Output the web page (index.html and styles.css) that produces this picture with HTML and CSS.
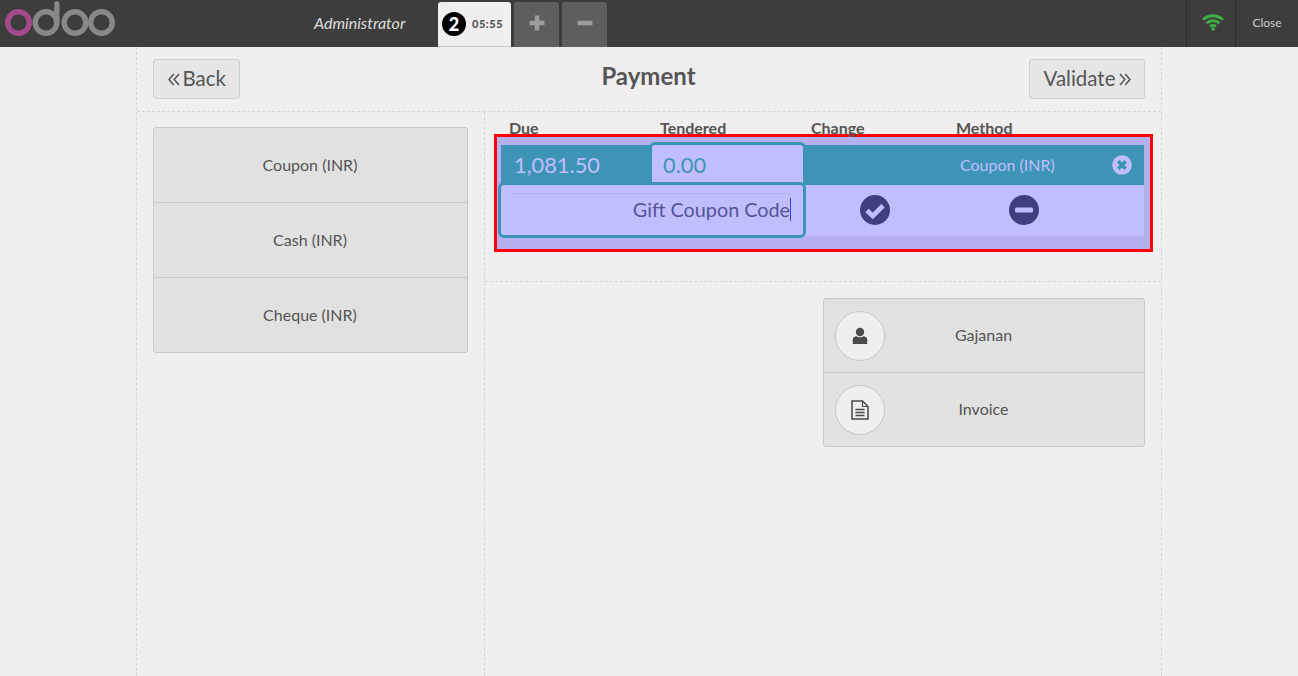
FILE: index.html
```html
<!DOCTYPE html>
<html lang="en">
<head>
<meta charset="utf-8">
<title>Payment</title>
<link rel="stylesheet" href="styles.css">
</head>
<body>
<header class="topbar">
  <svg class="logo" width="116" height="47" viewBox="0 0 116 47">
    <circle cx="18.500" cy="22.500" r="10.800" fill="none" stroke="#a34a8b" stroke-width="5.400"/>
    <g fill="none" stroke="#888" stroke-width="5.400">
      <circle cx="46" cy="22.500" r="10.800"/>
      <path d="M56.800 4V22.500" stroke-linecap="round"/>
      <circle cx="75" cy="22.500" r="10.800"/>
      <circle cx="101.500" cy="22.500" r="10.800"/>
    </g>
  </svg>
  <div class="cashier">Administrator</div>
  <div class="orders">
    <div class="tab"><span class="badge">2</span><span class="time">05:55</span></div>
    <button class="tab-btn"><svg width="16" height="16" viewBox="0 0 16 16"><path d="M0.500 8H15.500M8 0.500V15.500" stroke="#9c9c9c" stroke-width="4.500"/></svg></button>
    <button class="tab-btn"><svg width="16" height="16" viewBox="0 0 16 16"><path d="M0.500 8H15.500" stroke="#9c9c9c" stroke-width="4.500"/></svg></button>
  </div>
  <div class="status wifi">
    <svg width="22" height="17" viewBox="0 0 22 17" fill="none" stroke="#3fae49" stroke-width="2.800">
      <path d="M1 5.800C6.800 0.400 15.200 0.400 21 5.800"/>
      <path d="M4.500 9.300C8.300 5.900 13.700 5.900 17.500 9.300"/>
      <path d="M8 12.500C9.800 11.200 12.200 11.200 14 12.500"/>
      <circle cx="11" cy="15" r="1.800" fill="#3fae49" stroke="none"/>
    </svg>
  </div>
  <div class="status close">Close</div>
</header>
<main class="screen">
  <div class="paybar">
    <div class="bar-start">
      <button class="nav-btn">
        <svg class="chev" width="12" height="13" viewBox="0 0 12 13" fill="none" stroke="#555" stroke-width="1.500"><path d="M5.800 1L1 6.500L5.800 12M11 1L6.200 6.500L11 12"/></svg>
        <span>Back</span>
      </button>
    </div>
    <h1 class="title">Payment</h1>
    <div class="bar-end">
      <button class="nav-btn">
        <span>Validate</span>
        <svg class="chev" width="12" height="13" viewBox="0 0 12 13" fill="none" stroke="#555" stroke-width="1.500"><path d="M1 1L5.800 6.500L1 12M6.200 1L11 6.500L6.200 12"/></svg>
      </button>
    </div>
  </div>
  <div class="columns">
    <section class="left">
      <div class="methods">
        <div class="method">Coupon (INR)</div>
        <div class="method">Cash (INR)</div>
        <div class="method">Cheque (INR)</div>
      </div>
    </section>
    <section class="right">
      <div class="lines">
        <div class="heads">
          <span class="h-due">Due</span>
          <span class="h-tendered">Tendered</span>
          <span class="h-change">Change</span>
          <span class="h-method">Method</span>
        </div>
        <div class="highlight">
          <div class="row-selected">
            <span class="due">1,081.50</span>
            <span class="tendered">0.00</span>
            <span class="line-method">Coupon (INR)</span>
            <svg class="remove" width="20" height="20" viewBox="0 0 20 20">
              <circle cx="10" cy="10" r="9.800" fill="#c0beff"/>
              <path d="M6.300 6.300L13.700 13.700M13.700 6.300L6.300 13.700" stroke="#3e94b6" stroke-width="3.600"/>
            </svg>
          </div>
          <div class="row-extra">
            <div class="coupon-box"><div class="coupon-input"><span class="coupon-text">Gift Coupon Code</span></div></div>
            <svg class="act-check" width="30" height="30" viewBox="0 0 30 30">
              <circle cx="15" cy="15" r="15" fill="#403e80"/>
              <path d="M7 15.500L12.800 21L23 10.800" fill="none" stroke="#c0beff" stroke-width="4.800"/>
            </svg>
            <svg class="act-minus" width="30" height="30" viewBox="0 0 30 30">
              <circle cx="15" cy="15" r="15" fill="#403e80"/>
              <rect x="6" y="12.500" width="18" height="5" rx="1.500" fill="#c0beff"/>
            </svg>
          </div>
        </div>
      </div>
      <div class="extras">
        <div class="client-box">
          <div class="extra-row">
            <span class="round">
              <svg width="16" height="18" viewBox="0 0 16 18"><circle cx="8" cy="5" r="4.200" fill="#4c4a4a"/><path d="M0.800 17V12.500C0.800 10.500 2.500 9.500 4.500 9.200C6 10.600 10 10.600 11.500 9.200C13.500 9.500 15.200 10.500 15.200 12.500V17Z" fill="#4c4a4a"/></svg>
            </span>
            <span class="extra-label">Gajanan</span>
          </div>
          <div class="extra-row">
            <span class="round">
              <svg width="18" height="20" viewBox="0 0 18 20" fill="none" stroke="#4c4a4a"><path d="M1 1H11.500L17 6.500V19H1Z" stroke-width="1.500"/><path d="M11.500 1V6.500H17" stroke-width="1.200"/><path d="M4.500 9.500H13.500M4.500 12.500H13.500M4.500 15.500H13.500" stroke-width="1.300"/></svg>
            </span>
            <span class="extra-label">Invoice</span>
          </div>
        </div>
      </div>
    </section>
  </div>
</main>
</body>
</html>
```
FILE: styles.css
```css
* { box-sizing: border-box; }
html, body { margin: 0; height: 676px; overflow: hidden; }
body { background: #f0eeef; color: #555; font-family: Lato, "Open Sans", sans-serif; }
button { font-family: inherit; }

.topbar { height: 47px; background: #3d3d3d; display: flex; align-items: stretch; }
.logo { flex: none; }
.cashier { width: 289px; padding-left: 198px; line-height: 45px; font-size: 16px; font-style: italic; color: #ddd; white-space: nowrap; }
.orders { display: flex; gap: 3px; padding-top: 2px; margin-left: 33px; flex: 1; }
.tab { width: 73px; background: #f0eeef; border-bottom: 1px solid #ccc; border-radius: 3px 3px 0 0; display: flex; align-items: center; padding-left: 4px; gap: 6px; }
.badge { width: 24px; height: 24px; border-radius: 50%; background: #000; color: #fff; font-weight: 900; font-size: 18px; line-height: 24px; text-align: center; }
.time { font-size: 11px; font-weight: 900; color: #555; letter-spacing: .55px; margin-top: -1px; }
.tab-btn { width: 45px; border: 0; padding: 0 0 3px; background: #5e5e5e; border-radius: 3px 3px 0 0; display: flex; align-items: center; justify-content: center; }
.status { border-left: 1px solid #2d2d2d; display: flex; align-items: center; justify-content: center; }
.wifi { width: 49px; padding: 0 0 3px 4px; }
.close { width: 63px; font-size: 12px; color: #ccc; padding-bottom: 2px; }

.screen { width: 1026px; height: 629px; margin-left: 136px; border-left: 1px dashed #d6d6d6; border-right: 1px dashed #d6d6d6; }
.paybar { height: 65px; padding: 12px 16px 0; border-bottom: 1px dashed #d6d6d6; display: grid; grid-template-columns: 1fr auto 1fr; align-items: start; }
.bar-end { display: flex; justify-content: flex-end; }
.bar-start { display: flex; }
.nav-btn { height: 40px; padding: 0 13.500px; background: #e6e6e6; border: 1px solid #cfcfcf; border-radius: 3px; color: #555; font-size: 20.500px; display: flex; align-items: center; gap: 3px; }
.nav-btn span { margin-top: -3px; }
.chev { flex: none; }
.title { margin: 0 1px 0 0; text-align: center; font-size: 24px; font-weight: 700; line-height: 34px; color: #555; }

.columns { display: flex; height: 564px; }
.left { width: 348px; flex: none; padding: 15px 16px 0; border-right: 1px dashed #d6d6d6; }
.methods { border: 1px solid #c9c9c9; border-radius: 3px; background: #e1e1e1; }
.method { height: 75px; line-height: 74px; text-align: center; font-size: 16px; border-top: 1px solid #cacaca; padding-right: 1px; }
.method:first-child { height: 74px; border-top: 0; }
.method + .method { line-height: 73px; }
.right { flex: 1; }

.lines { height: 170px; padding-top: 7px; border-bottom: 1px dashed #d6d6d6; }
.heads { height: 15px; position: relative; font-size: 16px; font-weight: 700; line-height: 18px; color: #555; }
.heads span { position: absolute; top: 0; }
.h-due { left: 24px; }
.h-tendered { left: 175px; }
.h-change { left: 326px; }
.h-method { left: 471px; }

.highlight { width: 659px; height: 118px; margin-left: 9px; border: 3px solid #f00; background: #b5b0ef; padding: 8px 6px 13px 4px; }
.row-selected { height: 40px; background: #3e94b6; display: flex; align-items: center; font-size: 21.800px; color: #c0beff; position: relative; }
.due { width: 148px; padding: 0 0 1px 13px; }
.tendered { width: 157px; height: 43px; margin-top: -3px; padding: 5px 0 0 11px; background: #c0beff; color: #3e94b6; border: 3px solid #3e94b6; border-bottom: 0; border-radius: 6px 6px 0 0; position: relative; line-height: 30px; }
.line-method { margin-left: 154px; font-size: 16px; padding-bottom: 1px; }
.remove { margin-left: 57px; }
.row-extra { height: 51px; background: #c0beff; display: flex; align-items: center; position: relative; }
.coupon-box { position: absolute; left: -3px; top: -3px; width: 308px; height: 56px; background: #c0beff; border: 3px solid #3e94b6; border-radius: 6px; padding: 8px 12px 0 11px; }
.coupon-input { height: 30px; border-top: 1px solid #b3b0ef; border-radius: 3px; text-align: right; font-size: 19.800px; line-height: 31px; color: #55539a; }
.coupon-text { border-right: 1px solid #4040e8; display: inline-block; line-height: 23px; height: 23px; margin-top: 4px; vertical-align: top; }
.act-check { position: absolute; left: 359px; top: 10px; }
.act-minus { position: absolute; left: 508px; top: 10px; }

.extras { padding: 16px 16px 0 338px; }
.client-box { border: 1px solid #c9c9c9; border-radius: 3px; background: #e1e1e1; }
.extra-row { height: 74px; display: flex; align-items: center; padding: 0 62px 0 11px; border-top: 1px solid #cacaca; }
.extra-row:first-child { height: 73px; border-top: 0; }
.round { width: 50px; height: 50px; flex: none; border-radius: 50%; border: 1px solid #c6c6c6; background: #f0eeef; display: flex; align-items: center; justify-content: center; }
.extra-label { flex: 1; text-align: center; font-size: 16px; margin-top: -2px; }
```
